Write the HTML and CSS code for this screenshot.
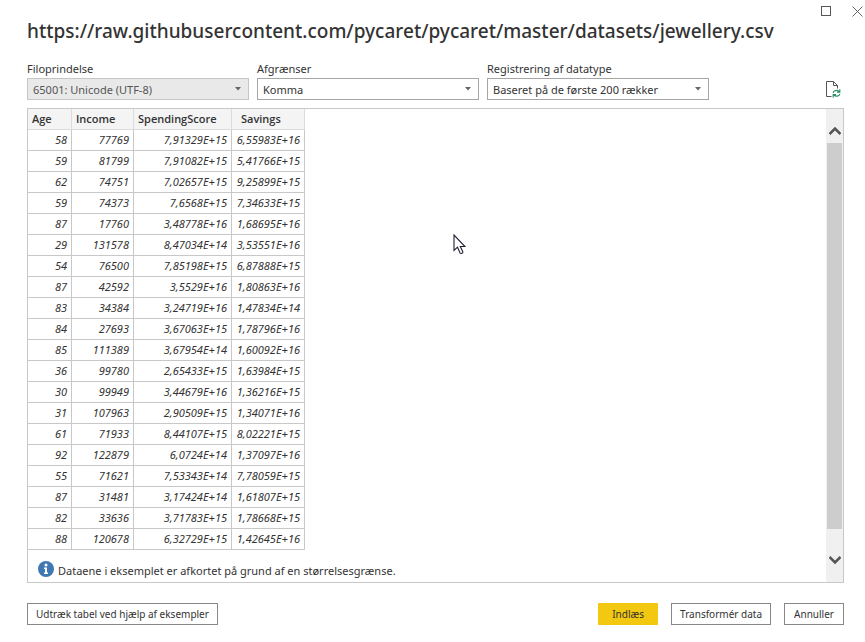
FILE: index.html
```html
<!DOCTYPE html>
<html lang="da">
<head>
<meta charset="utf-8">
<meta name="viewport" content="width=device-width, initial-scale=1">
<title>jewellery.csv</title>
<link rel="stylesheet" href="styles.css">
</head>
<body>
<main class="dialog">
  <div class="titlebar">
    <button class="window-button" type="button" aria-label="Maksimer"><svg width="11" height="11" viewBox="0 0 11 11"><rect x=".5" y=".5" width="9" height="9" fill="none" stroke="#555"/></svg></button>
    <button class="window-button" type="button" aria-label="Luk"><svg width="11" height="11" viewBox="0 0 11 11"><path d="M.5.5l10 10M10.500.5l-10 10" fill="none" stroke="#666"/></svg></button>
  </div>
  <div class="content">
    <h1 class="title">https://raw.githubusercontent.com/pycaret/pycaret/master/datasets/jewellery.csv</h1>
    <div class="options">
      <div class="field">
        <label for="origin">Filoprindelse</label>
        <div class="select-box">
          <select id="origin" class="muted"><option>65001: Unicode (UTF-8)</option></select>
          <svg class="caret" width="6" height="4" viewBox="0 0 6 4"><path d="M0 0h6L3 3.500z" fill="#666"/></svg>
        </div>
      </div>
      <div class="field">
        <label for="delimiter">Afgrænser</label>
        <div class="select-box">
          <select id="delimiter"><option>Komma</option></select>
          <svg class="caret" width="6" height="4" viewBox="0 0 6 4"><path d="M0 0h6L3 3.500z" fill="#666"/></svg>
        </div>
      </div>
      <div class="field">
        <label for="detection">Registrering af datatype</label>
        <div class="select-box">
          <select id="detection"><option>Baseret på de første 200 rækker</option></select>
          <svg class="caret" width="6" height="4" viewBox="0 0 6 4"><path d="M0 0h6L3 3.500z" fill="#666"/></svg>
        </div>
      </div>
      <button class="refresh" type="button" aria-label="Opdater">
        <svg width="16" height="17" viewBox="0 0 16 17" fill="none"><path d="M6.500 15.500H1.500V.5h7l4 4v3M8.500.5v4h4" stroke="#555"/><g stroke="#2f9168" stroke-width="1.200"><path d="M8.100 11.800c.3-2.300 4.200-3.200 5.900-1.200M14.800 8.300v2.800h-2.800M14.900 12.800c-.5 2.400-4.200 3.200-5.900 1.200M8.200 16.400v-2.800h2.800"/></g></svg>
      </button>
    </div>
    <section class="preview">
      <div class="preview-body">
        <table>
          <colgroup><col class="col-age"><col class="col-income"><col class="col-score"><col class="col-savings"></colgroup>
          <thead><tr><th>Age</th><th>Income</th><th>SpendingScore</th><th class="centered">Savings</th></tr></thead>
          <tbody>
            <tr><td>58</td><td>77769</td><td>7,91329E+15</td><td>6,55983E+16</td></tr>
            <tr><td>59</td><td>81799</td><td>7,91082E+15</td><td>5,41766E+15</td></tr>
            <tr><td>62</td><td>74751</td><td>7,02657E+15</td><td>9,25899E+15</td></tr>
            <tr><td>59</td><td>74373</td><td>7,6568E+15</td><td>7,34633E+15</td></tr>
            <tr><td>87</td><td>17760</td><td>3,48778E+16</td><td>1,68695E+16</td></tr>
            <tr><td>29</td><td>131578</td><td>8,47034E+14</td><td>3,53551E+16</td></tr>
            <tr><td>54</td><td>76500</td><td>7,85198E+15</td><td>6,87888E+15</td></tr>
            <tr><td>87</td><td>42592</td><td>3,5529E+16</td><td>1,80863E+16</td></tr>
            <tr><td>83</td><td>34384</td><td>3,24719E+16</td><td>1,47834E+14</td></tr>
            <tr><td>84</td><td>27693</td><td>3,67063E+15</td><td>1,78796E+16</td></tr>
            <tr><td>85</td><td>111389</td><td>3,67954E+14</td><td>1,60092E+16</td></tr>
            <tr><td>36</td><td>99780</td><td>2,65433E+15</td><td>1,63984E+15</td></tr>
            <tr><td>30</td><td>99949</td><td>3,44679E+16</td><td>1,36216E+15</td></tr>
            <tr><td>31</td><td>107963</td><td>2,90509E+15</td><td>1,34071E+16</td></tr>
            <tr><td>61</td><td>71933</td><td>8,44107E+15</td><td>8,02221E+15</td></tr>
            <tr><td>92</td><td>122879</td><td>6,0724E+14</td><td>1,37097E+16</td></tr>
            <tr><td>55</td><td>71621</td><td>7,53343E+14</td><td>7,78059E+15</td></tr>
            <tr><td>87</td><td>31481</td><td>3,17424E+14</td><td>1,61807E+15</td></tr>
            <tr><td>82</td><td>33636</td><td>3,71783E+15</td><td>1,78668E+15</td></tr>
            <tr><td>88</td><td>120678</td><td>6,32729E+15</td><td>1,42645E+16</td></tr>
          </tbody>
        </table>
        <p class="note">
          <svg width="16" height="16" viewBox="0 0 16 16"><circle cx="8" cy="8" r="8" fill="#4078b4"/><circle cx="8" cy="4" r="1.500" fill="#fff"/><path d="M6 6.500h3v5h1V13H6v-1.500h1V8H6z" fill="#fff"/></svg>
          <span>Dataene i eksemplet er afkortet på grund af en størrelsesgrænse.</span>
        </p>
      </div>
      <div class="scrollbar">
        <button type="button" aria-label="Rul op"><svg width="12" height="9" viewBox="0 0 12 9"><path d="M.5 8L6 2.500 11.500 8" fill="none" stroke="#555" stroke-width="2.600"/></svg></button>
        <div class="thumb"></div>
        <button class="down" type="button" aria-label="Rul ned"><svg width="12" height="9" viewBox="0 0 12 9"><path d="M.5 1L6 6.500 11.500 1" fill="none" stroke="#555" stroke-width="2.600"/></svg></button>
      </div>
    </section>
    <footer class="actions">
      <button class="action extract" type="button">Udtræk tabel ved hjælp af eksempler</button>
      <button class="action primary" type="button">Indlæs</button>
      <button class="action" type="button">Transformér data</button>
      <button class="action" type="button">Annuller</button>
    </footer>
  </div>
</main>
<svg class="pointer" width="13" height="21" viewBox="0 0 13 21"><path d="M1 1v15.500l3.500-3.300 2.600 5.800c.7 1.100 3.100.2 2.700-1.200L7.300 12.500H12z" fill="#fff" stroke="#222233" stroke-width="1.100"/></svg>
</body>
</html>
```
FILE: styles.css
```css
* {
  box-sizing: border-box;
}

body {
  margin: 0;
  background: #fff;
  color: #333;
  font: 11px/16px "Noto Sans", "Open Sans", sans-serif;
}

button,
select {
  margin: 0;
  padding: 0;
  border: 0;
  border-radius: 0;
  background: none;
  color: inherit;
  font: inherit;
}

svg {
  display: block;
  flex: none;
}

.dialog {
  display: flex;
  flex-direction: column;
  min-height: 100vh;
}

.titlebar {
  display: flex;
  justify-content: flex-end;
  gap: 20px;
  padding: 6px 2px 0 0;
}

.content {
  display: flex;
  flex: 1;
  flex-direction: column;
  padding: 0 21px 17px 27px;
}

.title {
  margin: 0;
  font-size: 19px;
  line-height: 28px;
  font-weight: 500;
  white-space: nowrap;
}

.options {
  display: flex;
  align-items: flex-end;
  gap: 8px;
  margin: 16px 0 8px;
}

.field {
  flex: 0 1 222px;
}

.field label {
  display: block;
  margin-bottom: 1px;
}

.select-box {
  position: relative;
}

.select-box select {
  display: block;
  width: 100%;
  height: 22px;
  padding: 1px 20px 0 5px;
  border: 1px solid #a6a6a6;
  background: #fff;
  appearance: none;
}

.select-box .muted {
  border-color: #c6c6c6;
  background: #e9e9e9;
  color: #555;
}

.caret {
  position: absolute;
  top: 9px;
  right: 8px;
  pointer-events: none;
}

.refresh {
  margin: 0 3px 2px auto;
}

.preview {
  display: flex;
  flex: 1;
  border: 1px solid #c8c8c8;
}

.preview-body {
  flex: 1;
}

table {
  table-layout: fixed;
  width: 277px;
  border-spacing: 0;
}

.col-age {
  width: 44px;
}

.col-income {
  width: 62px;
}

.col-score {
  width: 98px;
}

.col-savings {
  width: 73px;
}

th,
td {
  height: 21px;
  padding: 0 4px;
  border-right: 1px solid #c8c8c8;
  border-bottom: 1px solid #c8c8c8;
  font-size: 11px;
  white-space: nowrap;
}

th {
  border-color: #dcdcdc;
  background: #f4f4f4;
  font-family: "Open Sans", "Noto Sans", sans-serif;
  font-weight: 600;
  text-align: left;
}

th.centered {
  padding-left: 9px;
}

td {
  font-style: italic;
  text-align: right;
}

.note {
  display: flex;
  gap: 4px;
  margin: 0;
  padding: 11px 10px 3px;
}

.note span {
  padding-top: 2px;
}

.scrollbar {
  display: flex;
  flex-direction: column;
  width: 17px;
  padding: 0 1px;
  background: #f0f0f0;
}

.scrollbar button {
  display: flex;
  flex: none;
  align-items: center;
  justify-content: center;
  height: 34px;
  padding-top: 8px;
}

.thumb {
  flex: 1;
  background: #cdcdcd;
}

.scrollbar .down {
  height: 53px;
  padding-top: 10px;
}

.actions {
  display: flex;
  gap: 13px;
  margin-top: 20px;
}

.action {
  min-width: 60px;
  height: 22px;
  padding: 0 8px;
  border: 1px solid #888;
  font-size: 10px;
  white-space: nowrap;
}

.extract {
  margin-right: auto;
}

.primary {
  border-color: #f2c811;
  background: #f2c811;
}

.pointer {
  position: absolute;
  top: 234px;
  left: 453px;
}
```
